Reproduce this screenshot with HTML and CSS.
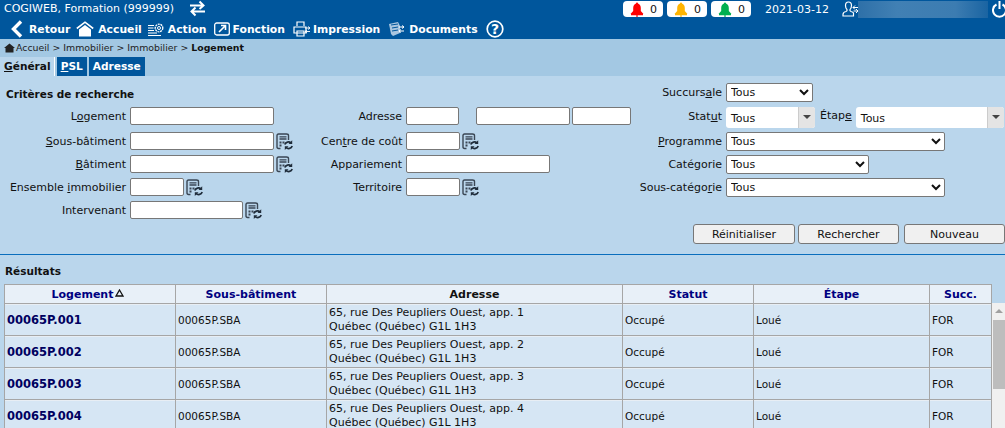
FILE: index.html
```html
<!DOCTYPE html>
<html lang="fr">
<head>
<meta charset="utf-8">
<title>Logement</title>
<link rel="stylesheet" href="styles.css">
</head>
<body>
<svg class="defs" width="0" height="0">
  <symbol id="calc" viewBox="0 0 17 17">
    <path d="M4.500 15.500H2.500Q1 15.500 1 14V2.500Q1 1 2.500 1H10.500Q12.500 1 12.500 2.500V7" fill="none" stroke="#3a4654" stroke-width="1.400"/>
    <path d="M3.500 3.800H10.500M3.500 6H10.500" stroke="#3a4654" stroke-width="1.300"/>
    <path d="M3.500 8.500h2v2h-2zM6.500 8.500h2v2h-2zM3.500 11.500h2v2h-2z" fill="#3a4654"/>
    <path d="M8.800 11.500A3.800 3.800 0 0 1 15 10M16.200 13A3.800 3.800 0 0 1 10 14.500" fill="none" stroke="#1f2c3a" stroke-width="1.700"/>
    <path d="M16.200 7.300V11H12.500zM8.800 16.900V13.200H12.500z" fill="#1f2c3a"/>
  </symbol>
  <symbol id="bell" viewBox="0 0 14 15">
    <path d="M7 .5Q8 .5 8 1.500Q10.800 2.500 10.800 6V9L13.500 12H.5L3.200 9V6Q3.200 2.500 6 1.500Q6 .5 7 .5Z" fill="currentColor"/>
    <path d="M1 12.700H13M7 12V15" stroke="currentColor" stroke-width="1.200"/>
  </symbol>
</svg>

<header class="topbar">
  <div class="top-line">
    <span class="org">COGIWEB, Formation (999999)</span>
    <svg class="swap" width="17" height="17" viewBox="0 0 17 17"><path d="M1 5.500H14M10.500 1.500L14.500 5.500L10.500 9M16 11.500H3M6.500 7.500L2.500 11.500L6.500 15.500" fill="none" stroke="#fff" stroke-width="2"/></svg>
    <div class="top-right">
      <span class="pill"><svg class="bell red" width="14" height="15"><use href="#bell"/></svg>0</span>
      <span class="pill"><svg class="bell amber" width="14" height="15"><use href="#bell"/></svg>0</span>
      <span class="pill"><svg class="bell green" width="14" height="15"><use href="#bell"/></svg>0</span>
      <span class="date">2021-03-12</span>
      <svg class="user" width="16" height="16" viewBox="0 0 16 16"><path d="M1 15V13.500Q1 11 4 10.500Q5.500 10 5 8.500Q3.500 7 3.500 4.500Q3.500 1 6.500 1Q9.500 1 9.500 4.500Q9.500 7 8 8.500Q7.500 10 9 10.500Q11 11 11.500 12V15Z" fill="none" stroke="#fff" stroke-width="1.200"/><path d="M11 6.500H16M13 4.500L11 6.500L13 8.500M16 10H11.500M14 8L16 10L14 12" fill="none" stroke="#fff"/></svg>
      <span class="blurred"></span>
      <svg class="power" width="15" height="17" viewBox="0 0 15 17"><path d="M4.500 3.500A6.500 6.500 0 1 0 10.500 3.500M7.500 0V8" fill="none" stroke="#fff" stroke-width="2"/></svg>
    </div>
  </div>
  <nav class="nav">
    <a class="nav-item back"><svg width="14" height="18" viewBox="0 0 14 18"><path d="M11 1.500L3.500 9L11 16.500" fill="none" stroke="#fff" stroke-width="3.400"/></svg>Retour</a>
    <a class="nav-item home"><svg width="18" height="16" viewBox="0 0 18 16"><path d="M.8 7.500L9 1.200L17.200 7.500" fill="none" stroke="#fff" stroke-width="1.600"/><path d="M3 8.500L9 4L15 8.500V15.500H3Z" fill="#fff"/></svg>Accueil</a>
    <a class="nav-item action"><svg width="17" height="15" viewBox="0 0 17 15"><circle cx="11" cy="6" r="3.800" fill="none" stroke="#fff" stroke-width="1.300" stroke-dasharray="2 .7"/><circle cx="11" cy="6" r="1.500" fill="none" stroke="#fff"/><path d="M0 3.500H6M0 6H5.500M0 8.500H6M0 11H9M0 13.500H13" stroke="#fff"/></svg>Action</a>
    <a class="nav-item"><svg width="16" height="14" viewBox="0 0 16 14"><rect x=".7" y="1" width="14.600" height="12" rx="2" fill="none" stroke="#fff" stroke-width="1.300"/><path d="M5 10L11 4M7 3.500H11.500V8" fill="none" stroke="#fff" stroke-width="1.600"/></svg>Fonction</a>
    <a class="nav-item"><svg width="17" height="16" viewBox="0 0 17 16"><path d="M4 5V1H11V5M1 6H13V12H1ZM4 10H11V15H4Z" fill="none" stroke="#fff" stroke-width="1.200"/><path d="M12 7H17M15 5.500L17 7L15 8.500M12 10.500H17M14 9L12 10.500L14 12" fill="none" stroke="#fff" stroke-width=".9"/></svg>Impression</a>
    <a class="nav-item docs"><svg width="16" height="16" viewBox="0 0 16 16"><path d="M1 3L10 1L12 5V7H12V12L5 15L3 13Z" fill="#a9c6e0"/><path d="M3 4L10 3M4 7L10 6M4 10L10 9" stroke="#00569c"/><path d="M11 6H16M14 4.500L16 6L14 7.500M11 10H16M13 8.500L11 10L13 11.500" fill="none" stroke="#fff"/></svg>Documents</a>
    <svg class="help" width="18" height="18" viewBox="0 0 18 18"><circle cx="9" cy="9" r="7.800" fill="none" stroke="#fff" stroke-width="1.700"/><text x="9" y="13.500" text-anchor="middle" class="help-q">?</text></svg>
  </nav>
</header>

<section class="subhead">
  <div class="crumbs">
    <svg width="11" height="10" viewBox="0 0 11 10"><path d="M5.500 .5L0 5H1.500V9.500H9.500V5H11Z" fill="#222"/></svg>
    <span>Accueil &gt; Immobilier &gt; Immobilier &gt; <b>Logement</b></span>
  </div>
  <div class="tabs">
    <a class="tab active"><u>G</u>énéral</a>
    <a class="tab"><u>P</u>SL</a>
    <a class="tab">Adresse</a>
  </div>
</section>

<main class="content">
  <h2 class="title crit">Critères de recherche</h2>
  <form class="form">
    <div class="col col-a">
      <div class="row first"><label>L<u>o</u>gement</label><input class="w144"></div>
      <div class="row"><label><u>S</u>ous-bâtiment</label><input class="w144"><svg class="ico"><use href="#calc"/></svg></div>
      <div class="row"><label><u>B</u>âtiment</label><input class="w144"><svg class="ico"><use href="#calc"/></svg></div>
      <div class="row"><label>Ensemble <u>i</u>mmobilier</label><input class="w54"><svg class="ico"><use href="#calc"/></svg></div>
      <div class="row"><label>Intervenant</label><input class="w113"><svg class="ico"><use href="#calc"/></svg></div>
    </div>
    <div class="col col-b">
      <div class="row first"><label>Adresse</label><input class="w53"><input class="w94 sp"><input class="w59"></div>
      <div class="row"><label>Cen<u>t</u>re de coût</label><input class="w54"><svg class="ico"><use href="#calc"/></svg></div>
      <div class="row"><label>Appariement</label><input class="w144"></div>
      <div class="row"><label>Territoire</label><input class="w54"><svg class="ico"><use href="#calc"/></svg></div>
    </div>
    <div class="col col-c">
      <div class="row top"><label>Succurs<u>a</u>le</label><select class="s87"><option>Tous</option></select></div>
      <div class="row combo-row">
        <label>Stat<u>u</u>t</label>
        <span class="combo c89"><span class="combo-text">Tous</span><span class="combo-btn"></span></span>
        <label class="etape">Étap<u>e</u></label>
        <span class="combo c148"><span class="combo-text">Tous</span><span class="combo-btn"></span></span>
      </div>
      <div class="row"><label><u>P</u>rogramme</label><select class="s219"><option>Tous</option></select></div>
      <div class="row"><label>Catégorie</label><select class="s143"><option>Tous</option></select></div>
      <div class="row"><label>Sous-catégo<u>r</u>ie</label><select class="s219"><option>Tous</option></select></div>
    </div>
  </form>
  <div class="actions">
    <button type="button" class="btn">Réinitialiser</button>
    <button type="button" class="btn narrow">Rechercher</button>
    <button type="button" class="btn narrow last">Nouveau</button>
  </div>
  <hr class="rule">
  <h2 class="title res">Résultats</h2>
  <div class="results">
    <table class="grid">
      <colgroup><col class="c1"><col class="c2"><col class="c3"><col class="c4"><col class="c5"><col class="c6"></colgroup>
      <thead>
        <tr><th class="sorted">Logement<svg class="sort" width="9" height="8" viewBox="0 0 9 8"><path d="M4.500 1L8 7H1Z" fill="none" stroke="#111" stroke-width="1.300"/></svg></th><th>Sous-bâtiment</th><th class="dark">Adresse</th><th>Statut</th><th>Étape</th><th>Succ.</th></tr>
      </thead>
      <tbody>
        <tr><td class="key">00065P.001</td><td>00065P.SBA</td><td class="addr">65, rue Des Peupliers Ouest, app. 1<br>Québec (Québec) G1L 1H3</td><td>Occupé</td><td>Loué</td><td>FOR</td></tr>
        <tr><td class="key">00065P.002</td><td>00065P.SBA</td><td class="addr">65, rue Des Peupliers Ouest, app. 2<br>Québec (Québec) G1L 1H3</td><td>Occupé</td><td>Loué</td><td>FOR</td></tr>
        <tr><td class="key">00065P.003</td><td>00065P.SBA</td><td class="addr">65, rue Des Peupliers Ouest, app. 3<br>Québec (Québec) G1L 1H3</td><td>Occupé</td><td>Loué</td><td>FOR</td></tr>
        <tr><td class="key">00065P.004</td><td>00065P.SBA</td><td class="addr">65, rue Des Peupliers Ouest, app. 4<br>Québec (Québec) G1L 1H3</td><td>Occupé</td><td>Loué</td><td>FOR</td></tr>
      </tbody>
    </table>
    <div class="scrollbar"><span class="arrow"></span><span class="thumb"></span></div>
  </div>
</main>
</body>
</html>
```

FILE: styles.css
```css
* { box-sizing: border-box; }
html, body { margin: 0; height: 428px; overflow: hidden; }
body { font-family: "DejaVu Sans", Verdana, sans-serif; font-size: 11px; color: #111; background: #bad6ec; }
.defs { position: absolute; }
svg { display: block; flex: none; }

.topbar { height: 39px; background: #00569c; color: #fff; }
.top-line { display: flex; align-items: flex-start; height: 18px; padding-left: 4px; }
.org { font-size: 11px; line-height: 18px; }
.swap { margin: 0 0 0 15px; }
.top-right { margin-left: auto; display: flex; align-items: center; height: 18px; }
.pill { display: flex; align-items: center; width: 40px; height: 16px; margin-right: 4px; padding-left: 7px; background: #fff; border-radius: 4px; color: #111; font-size: 11px; }
.bell { margin-right: 6px; }
.red { color: #f00; }
.amber { color: #ffb400; }
.green { color: #00b050; }
.date { margin: 0 13px 0 10px; font-size: 11px; }
.blurred { width: 130px; height: 17px; margin-right: 4px; background: linear-gradient(90deg, #2e70a8, #4180b4 30%, #3c7cb1 75%, #1a64a2); }
.power { margin-right: -2px; }

.nav { display: flex; align-items: center; height: 21px; padding: 1px 0 0 10px; }
.nav-item { display: flex; align-items: center; gap: 3px; margin-right: 8px; font-size: 10.8px; font-weight: bold; color: #fff; }
.back { gap: 5px; margin-right: 6px; }
.home { gap: 4px; margin-right: 6px; }
.action { margin-right: 7px; }
.docs { gap: 5px; margin-right: 8px; }
.help-q { font: bold 14px "DejaVu Sans", sans-serif; fill: #fff; }

.subhead { height: 37px; background: #a3c8e3; display: flex; flex-direction: column; justify-content: space-between; }
.crumbs { display: flex; align-items: center; gap: 1px; height: 17px; padding: 0 0 0 4px; font-size: 9.4px; color: #222; }
.crumbs b { color: #111; }
.tabs { display: flex; gap: 2px; height: 19px; }
.tab { display: block; line-height: 18px; padding: 0 4px; font-size: 10.6px; font-weight: bold; background: #00569c; color: #fff; }
.tab.active { background: #bad6ec; color: #111; padding: 0 3px 0 4px; border-right: 1px solid #fff; }

.content { padding-top: 11px; }
.title { margin: 0; font-size: 10.5px; line-height: 14px; font-weight: bold; }
.crit { padding-left: 6px; }
.form { display: flex; height: 127px; margin-top: -4px; }
.col { flex: none; }
.col-a { width: 321px; padding-top: 10px; }
.col-b { width: 305px; padding-top: 10px; }
.col-c { flex: 1; margin-top: -14px; }
.row { display: flex; align-items: flex-start; height: 23px; }
.row.first { height: 25px; }
.row.top { height: 24px; }
.row.combo-row { height: 25px; }
.row label { flex: none; text-align: right; margin-right: 4px; line-height: 20px; white-space: nowrap; }
.col-a label { width: 126px; }
.col-b label { width: 81px; }
.col-c label { width: 96px; }
.row label.etape { width: auto; margin: 0 4px 0 5px; line-height: 18px; }
input { display: block; flex: none; height: 18px; padding: 0 2px; background: #fff; border: 1px solid #777; border-radius: 2px; font: inherit; }
.w144 { width: 144px; }
.w113 { width: 113px; }
.w54 { width: 54px; }
.w53 { width: 53px; }
.w94 { width: 94px; }
.w59 { width: 59px; }
.sp { margin: 0 2px 0 17px; }
.ico { width: 17px; height: 17px; margin: 1px 0 0 2px; }
select { display: block; flex: none; height: 19px; padding: 0; background: #fff; border: 1px solid #777; border-radius: 2px; font: inherit; color: #111; }
.s87 { width: 87px; }
.s143 { width: 143px; }
.s219 { width: 219px; }
.combo { display: flex; flex: none; height: 21px; background: #fff; border-radius: 3px; }
.c89 { width: 89px; }
.c148 { width: 148px; }
.combo-text { flex: 1; padding: 5px 0 0 5px; line-height: 14px; }
.combo-btn { position: relative; width: 17px; background: #e4e4e4; border-left: 1px solid #ccc; border-radius: 0 3px 3px 0; }
.combo-btn::after { content: ""; position: absolute; left: 4px; top: 8px; border: 4px solid transparent; border-top: 4px solid #444; border-bottom: 0; }

.actions { display: flex; justify-content: flex-end; gap: 3px; height: 20px; }
.btn { width: 102px; height: 20px; padding: 0; background: #f0f0f0; border: 1px solid #777; border-radius: 3px; font: inherit; color: #111; }
.btn.narrow { width: 101px; }
.btn.last { margin-left: 2px; }
.rule { height: 1px; margin: 10px 0 0; border: 0; background: #0a6ebd; }
.res { padding-left: 5px; margin-top: 9px; }
.results { display: flex; align-items: flex-start; margin-top: 6px; padding-left: 4px; }
.grid { flex: none; width: 988px; table-layout: fixed; border-collapse: collapse; background: #d6e6f4; }
.c1 { width: 171px; }
.c2 { width: 151px; }
.c3 { width: 296px; }
.c4 { width: 131px; }
.c5 { width: 176px; }
.grid th { height: 19px; padding: 0; background: #e8f0f8; border: 1px solid #a6a6a6; color: #000080; font-size: 11px; text-align: center; }
.grid th.dark { color: #111; }
.grid th.sorted { padding-right: 4px; }
.sort { display: inline-block; vertical-align: 1px; margin-left: 2px; }
.grid td { height: 32px; padding: 0 2px; border: 1px solid #a6a6a6; line-height: 14px; font-size: 10.5px; box-shadow: inset 0 1px 0 #e8eef4; }
.grid td.key { font-size: 11.5px; font-weight: bold; color: #000060; }
.grid td.addr { font-size: 11px; }
.scrollbar { position: relative; flex: none; width: 13px; height: 125px; margin-top: 19px; background: #f0f0f0; }
.arrow { position: absolute; left: 3px; top: 6px; border: 4px solid transparent; border-bottom: 4px solid #a0a0a0; border-top: 0; }
.thumb { position: absolute; left: 1px; right: 0; top: 17px; height: 69px; background: #bdbdbd; }
```
